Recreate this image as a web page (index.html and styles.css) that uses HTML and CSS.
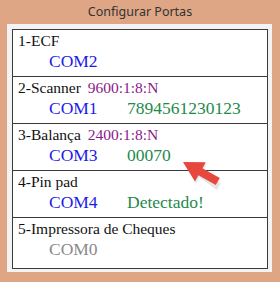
FILE: index.html
```html
<!DOCTYPE html>
<html lang="pt">
<head>
    <meta charset="UTF-8">
    <title>Configurar Portas</title>
    <link rel="stylesheet" href="styles.css">
</head>
<body>
    <div class="window">
        <div class="titlebar">Configurar Portas</div>
        <div class="client">
            <div class="port-list">
                <div class="port">
                    <div class="port-head">1-ECF</div>
                    <div class="port-line"><span class="com">COM2</span></div>
                </div>
                <div class="port">
                    <div class="port-head">2-Scanner <span class="baud">9600:1:8:N</span></div>
                    <div class="port-line"><span class="com">COM1</span><span class="value">7894561230123</span></div>
                </div>
                <div class="port">
                    <div class="port-head">3-Balança <span class="baud">2400:1:8:N</span></div>
                    <div class="port-line"><span class="com">COM3</span><span class="value">00070</span></div>
                </div>
                <div class="port">
                    <div class="port-head">4-Pin pad</div>
                    <div class="port-line"><span class="com">COM4</span><span class="value">Detectado!</span></div>
                </div>
                <div class="port">
                    <div class="port-head">5-Impressora de Cheques</div>
                    <div class="port-line"><span class="com off">COM0</span></div>
                </div>
            </div>
        </div>

        <!-- annotation arrow over the list -->
        <svg class="arrow" width="50" height="36" viewBox="0 0 50 36">
            <polygon class="arrow-shadow" points="6,9 28.8,9.2 25.4,15.3 42.8,28.6 38.8,35.1 21.4,22.3 18,28.4"/>
            <polygon class="arrow-body" points="5,7 27.8,7.2 24.4,13.3 41.8,23.1 37.8,30.1 20.4,20.3 17,26.4"/>
        </svg>
    </div>
</body>
</html>
```

FILE: styles.css
```css
body {
    margin: 0;
    background: #dfa686;
}
.window {
    position: relative;
    width: 280px;
    height: 282px;
    display: flex;
    flex-direction: column;
    background: #dfa686;
}
.titlebar {
    height: 24px;
    line-height: 23px;
    text-align: center;
    font-family: "Noto Sans", sans-serif;
    font-size: 12.5px;
    color: #333;
}
.client {
    flex: 1;
    display: flex;
    margin: 0 8px 10px 7px;
    padding: 5px 4px 3px 5px;
    background: #f3f3f3;
}
.port-list {
    flex: 1;
    display: flex;
    flex-direction: column;
    background: #fff;
    border: 1px solid #3b3b3b;
    font-family: "Liberation Serif", "Times New Roman", serif;
}
.port {
    height: 47px;
    padding: 2px 0 0 5px;
    box-sizing: border-box;
    border-bottom: 1px solid #3b3b3b;
}
.port:last-child {
    flex: 1;
    border-bottom: none;
}
.port-head {
    font-size: 15.5px;
    line-height: 18px;
    color: #111;
}
.baud {
    margin-left: 3px;
    color: #8a1a8a;
}
.port-line {
    display: flex;
    padding-left: 31px;
    font-size: 17.5px;
    line-height: 22px;
}
.com {
    width: 78px;
    color: #1c1ce6;
}
.com.off {
    color: #8a8a8a;
}
.value {
    color: #1f8a4c;
}
.arrow {
    position: absolute;
    left: 178px;
    top: 155px;
}
.arrow-shadow {
    fill: rgba(0, 0, 0, 0.1);
}
.arrow-body {
    fill: #e8473d;
}
```
